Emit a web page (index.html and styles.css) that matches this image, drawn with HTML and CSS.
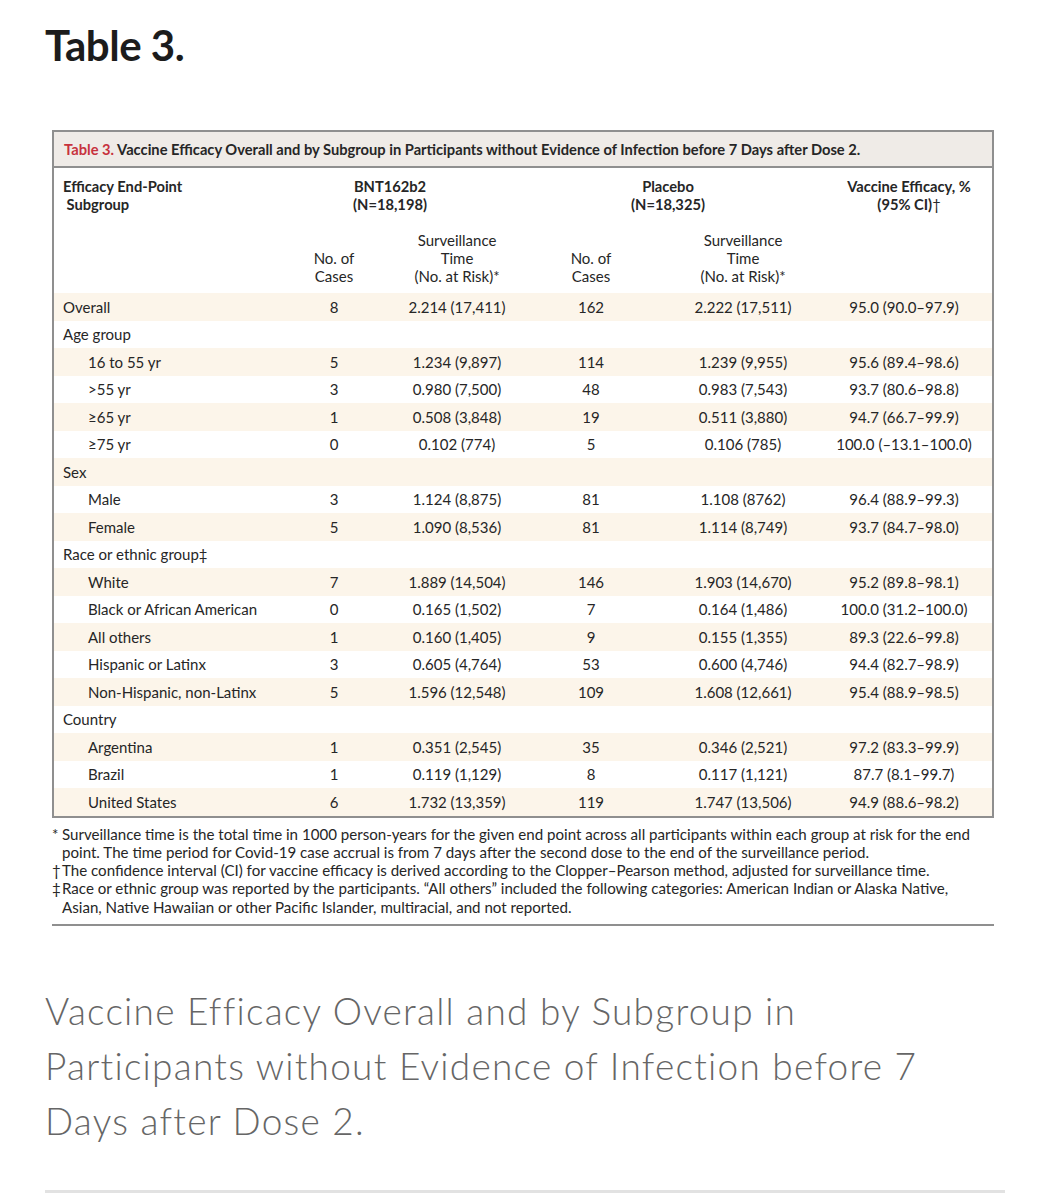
FILE: index.html
```html
<!DOCTYPE html>
<html>
<head>
<meta charset="utf-8">
<link rel="stylesheet" href="styles.css">
</head>
<body>
<div class="page">
  <h1 class="heading">Table 3.</h1>
  <div class="figure">
    <div class="box">
      <div class="titlebar"><span class="tnum">Table 3.</span> Vaccine Efficacy Overall and by Subgroup in Participants without Evidence of Infection before 7 Days after Dose 2.</div>
      <table class="data">
        <colgroup>
          <col class="c-label"><col class="c-n1"><col class="c-s1"><col class="c-n2"><col class="c-s2"><col class="c-ve">
        </colgroup>
        <thead>
          <tr class="h1">
            <th class="lab">Efficacy End-Point<br>&nbsp;Subgroup</th>
            <th colspan="2" class="grp grp1">BNT162b2<br>(N=18,198)</th>
            <th colspan="2" class="grp grp2">Placebo<br>(N=18,325)</th>
            <th class="ve">Vaccine Efficacy, %<br>(95% CI)<span class="mk">†</span></th>
          </tr>
          <tr class="h2">
            <th></th>
            <th class="sub">No. of<br>Cases</th>
            <th class="sub">Surveillance<br>Time<br>(No. at Risk)<span class="mk">*</span></th>
            <th class="sub">No. of<br>Cases</th>
            <th class="sub s2">Surveillance<br>Time<br>(No. at Risk)<span class="mk">*</span></th>
            <th></th>
          </tr>
        </thead>
        <tbody>
          <tr class="s"><td class="lab">Overall</td><td>8</td><td>2.214 (17,411)</td><td>162</td><td class="s2">2.222 (17,511)</td><td class="ve">95.0 (90.0–97.9)</td></tr>
          <tr><td class="lab">Age group</td><td></td><td></td><td></td><td class="s2"></td><td class="ve"></td></tr>
          <tr class="s"><td class="lab ind">16 to 55 yr</td><td>5</td><td>1.234 (9,897)</td><td>114</td><td class="s2">1.239 (9,955)</td><td class="ve">95.6 (89.4–98.6)</td></tr>
          <tr><td class="lab ind">&gt;55 yr</td><td>3</td><td>0.980 (7,500)</td><td>48</td><td class="s2">0.983 (7,543)</td><td class="ve">93.7 (80.6–98.8)</td></tr>
          <tr class="s"><td class="lab ind">≥65 yr</td><td>1</td><td>0.508 (3,848)</td><td>19</td><td class="s2">0.511 (3,880)</td><td class="ve">94.7 (66.7–99.9)</td></tr>
          <tr><td class="lab ind">≥75 yr</td><td>0</td><td>0.102 (774)</td><td>5</td><td class="s2">0.106 (785)</td><td class="ve">100.0 (–13.1–100.0)</td></tr>
          <tr class="s"><td class="lab">Sex</td><td></td><td></td><td></td><td class="s2"></td><td class="ve"></td></tr>
          <tr><td class="lab ind">Male</td><td>3</td><td>1.124 (8,875)</td><td>81</td><td class="s2">1.108 (8762)</td><td class="ve">96.4 (88.9–99.3)</td></tr>
          <tr class="s"><td class="lab ind">Female</td><td>5</td><td>1.090 (8,536)</td><td>81</td><td class="s2">1.114 (8,749)</td><td class="ve">93.7 (84.7–98.0)</td></tr>
          <tr><td class="lab">Race or ethnic group<span class="mk">‡</span></td><td></td><td></td><td></td><td class="s2"></td><td class="ve"></td></tr>
          <tr class="s"><td class="lab ind">White</td><td>7</td><td>1.889 (14,504)</td><td>146</td><td class="s2">1.903 (14,670)</td><td class="ve">95.2 (89.8–98.1)</td></tr>
          <tr><td class="lab ind">Black or African American</td><td>0</td><td>0.165 (1,502)</td><td>7</td><td class="s2">0.164 (1,486)</td><td class="ve">100.0 (31.2–100.0)</td></tr>
          <tr class="s"><td class="lab ind">All others</td><td>1</td><td>0.160 (1,405)</td><td>9</td><td class="s2">0.155 (1,355)</td><td class="ve">89.3 (22.6–99.8)</td></tr>
          <tr><td class="lab ind">Hispanic or Latinx</td><td>3</td><td>0.605 (4,764)</td><td>53</td><td class="s2">0.600 (4,746)</td><td class="ve">94.4 (82.7–98.9)</td></tr>
          <tr class="s"><td class="lab ind">Non-Hispanic, non-Latinx</td><td>5</td><td>1.596 (12,548)</td><td>109</td><td class="s2">1.608 (12,661)</td><td class="ve">95.4 (88.9–98.5)</td></tr>
          <tr><td class="lab">Country</td><td></td><td></td><td></td><td class="s2"></td><td class="ve"></td></tr>
          <tr class="s"><td class="lab ind">Argentina</td><td>1</td><td>0.351 (2,545)</td><td>35</td><td class="s2">0.346 (2,521)</td><td class="ve">97.2 (83.3–99.9)</td></tr>
          <tr><td class="lab ind">Brazil</td><td>1</td><td>0.119 (1,129)</td><td>8</td><td class="s2">0.117 (1,121)</td><td class="ve">87.7 (8.1–99.7)</td></tr>
          <tr class="s"><td class="lab ind">United States</td><td>6</td><td>1.732 (13,359)</td><td>119</td><td class="s2">1.747 (13,506)</td><td class="ve">94.9 (88.6–98.2)</td></tr>
        </tbody>
      </table>
    </div>
    <div class="notes">
      <p><span class="nm">*</span>Surveillance time is the total time in 1000 person-years for the given end point across all participants within each group at risk for the end point. The time period for Covid-19 case accrual is from 7 days after the second dose to the end of the surveillance period.</p>
      <p><span class="nm">†</span>The confidence interval (CI) for vaccine efficacy is derived according to the Clopper–Pearson method, adjusted for surveillance time.</p>
      <p><span class="nm">‡</span>Race or ethnic group was reported by the participants. “All others” included the following categories: American Indian or Alaska Native, Asian, Native Hawaiian or other Pacific Islander, multiracial, and not reported.</p>
    </div>
  </div>
  <p class="caption">Vaccine Efficacy Overall and by Subgroup in Participants without Evidence of Infection before 7 Days after Dose 2.</p>
  <div class="rule"></div>
</div>
</body>
</html>
```
FILE: styles.css
```css
html, body {
  margin: 0;
  padding: 0;
  background: #ffffff;
}
.page {
  padding: 0 0 0 45px;
  font-family: Lato, "Open Sans", sans-serif;
}
.heading {
  margin: 0;
  padding-top: 21px;
  font-size: 42px;
  line-height: 48px;
  font-weight: 700;
  color: #1c1c1c;
  letter-spacing: -0.5px;
}
.figure {
  margin: 61px 44px 0 7px;
}
.box {
  border: 2px solid #8f8f8f;
  color: #262626;
}
.titlebar {
  background: #efebe7;
  border-bottom: 2px solid #8f8f8f;
  padding: 9px 10px 8px;
  font-size: 14.7px;
  line-height: 17px;
  font-weight: 700;
  color: #262626;
}
.tnum {
  color: #c7323d;
}
.data {
  width: 100%;
  border-collapse: collapse;
  table-layout: fixed;
  font-size: 15px;
}
.c-label { width: 236px; }
.c-n1 { width: 88px; }
.c-s1 { width: 158px; }
.c-n2 { width: 110px; }
.c-s2 { width: 190px; }
.c-ve { width: 156px; }
.data th {
  font-weight: 400;
  text-align: center;
  vertical-align: bottom;
  line-height: 18px;
  padding: 0;
}
.data .h1 th {
  font-weight: 700;
  font-size: 14.7px;
  vertical-align: top;
  padding: 9px 0 9px;
}
.data .h1 th.lab {
  text-align: left;
  padding-left: 9px;
}
.data .h1 th.grp1 { padding-right: 46px; }
.data .h1 th.grp2 { padding-right: 36px; }
.data .h1 th.ve { padding-right: 10px; }
.data .h2 th {
  padding: 9px 0 8px;
}
.data .h2 th.s2 {
  padding-left: 4px;
}
.mk {
  font-weight: 400;
}
.data td {
  height: 27.5px;
  padding: 0;
  text-align: center;
  line-height: 18px;
  white-space: nowrap;
}
.data td.lab {
  text-align: left;
  padding-left: 9px;
}
.data td.ind {
  padding-left: 34px;
}
.data td.s2 {
  padding-left: 4px;
}
.data td.ve {
  padding-right: 20px;
}
.data tr.s td {
  background: #fcf5ea;
}
.notes {
  border-bottom: 2px solid #8f8f8f;
  padding: 7px 12px 8px 10px;
  font-size: 15.1px;
  line-height: 18.3px;
  color: #262626;
}
.notes p {
  margin: 0;
  position: relative;
}
.nm {
  position: absolute;
  left: -10px;
  top: 0;
}
.caption {
  margin: 57px 108px 0 0;
  font-size: 37px;
  font-weight: 300;
  letter-spacing: 1.25px;
  line-height: 55px;
  color: #666666;
}
.rule {
  margin: 42px 33px 0 0;
  height: 3px;
  background: #e2e2e2;
}
```
